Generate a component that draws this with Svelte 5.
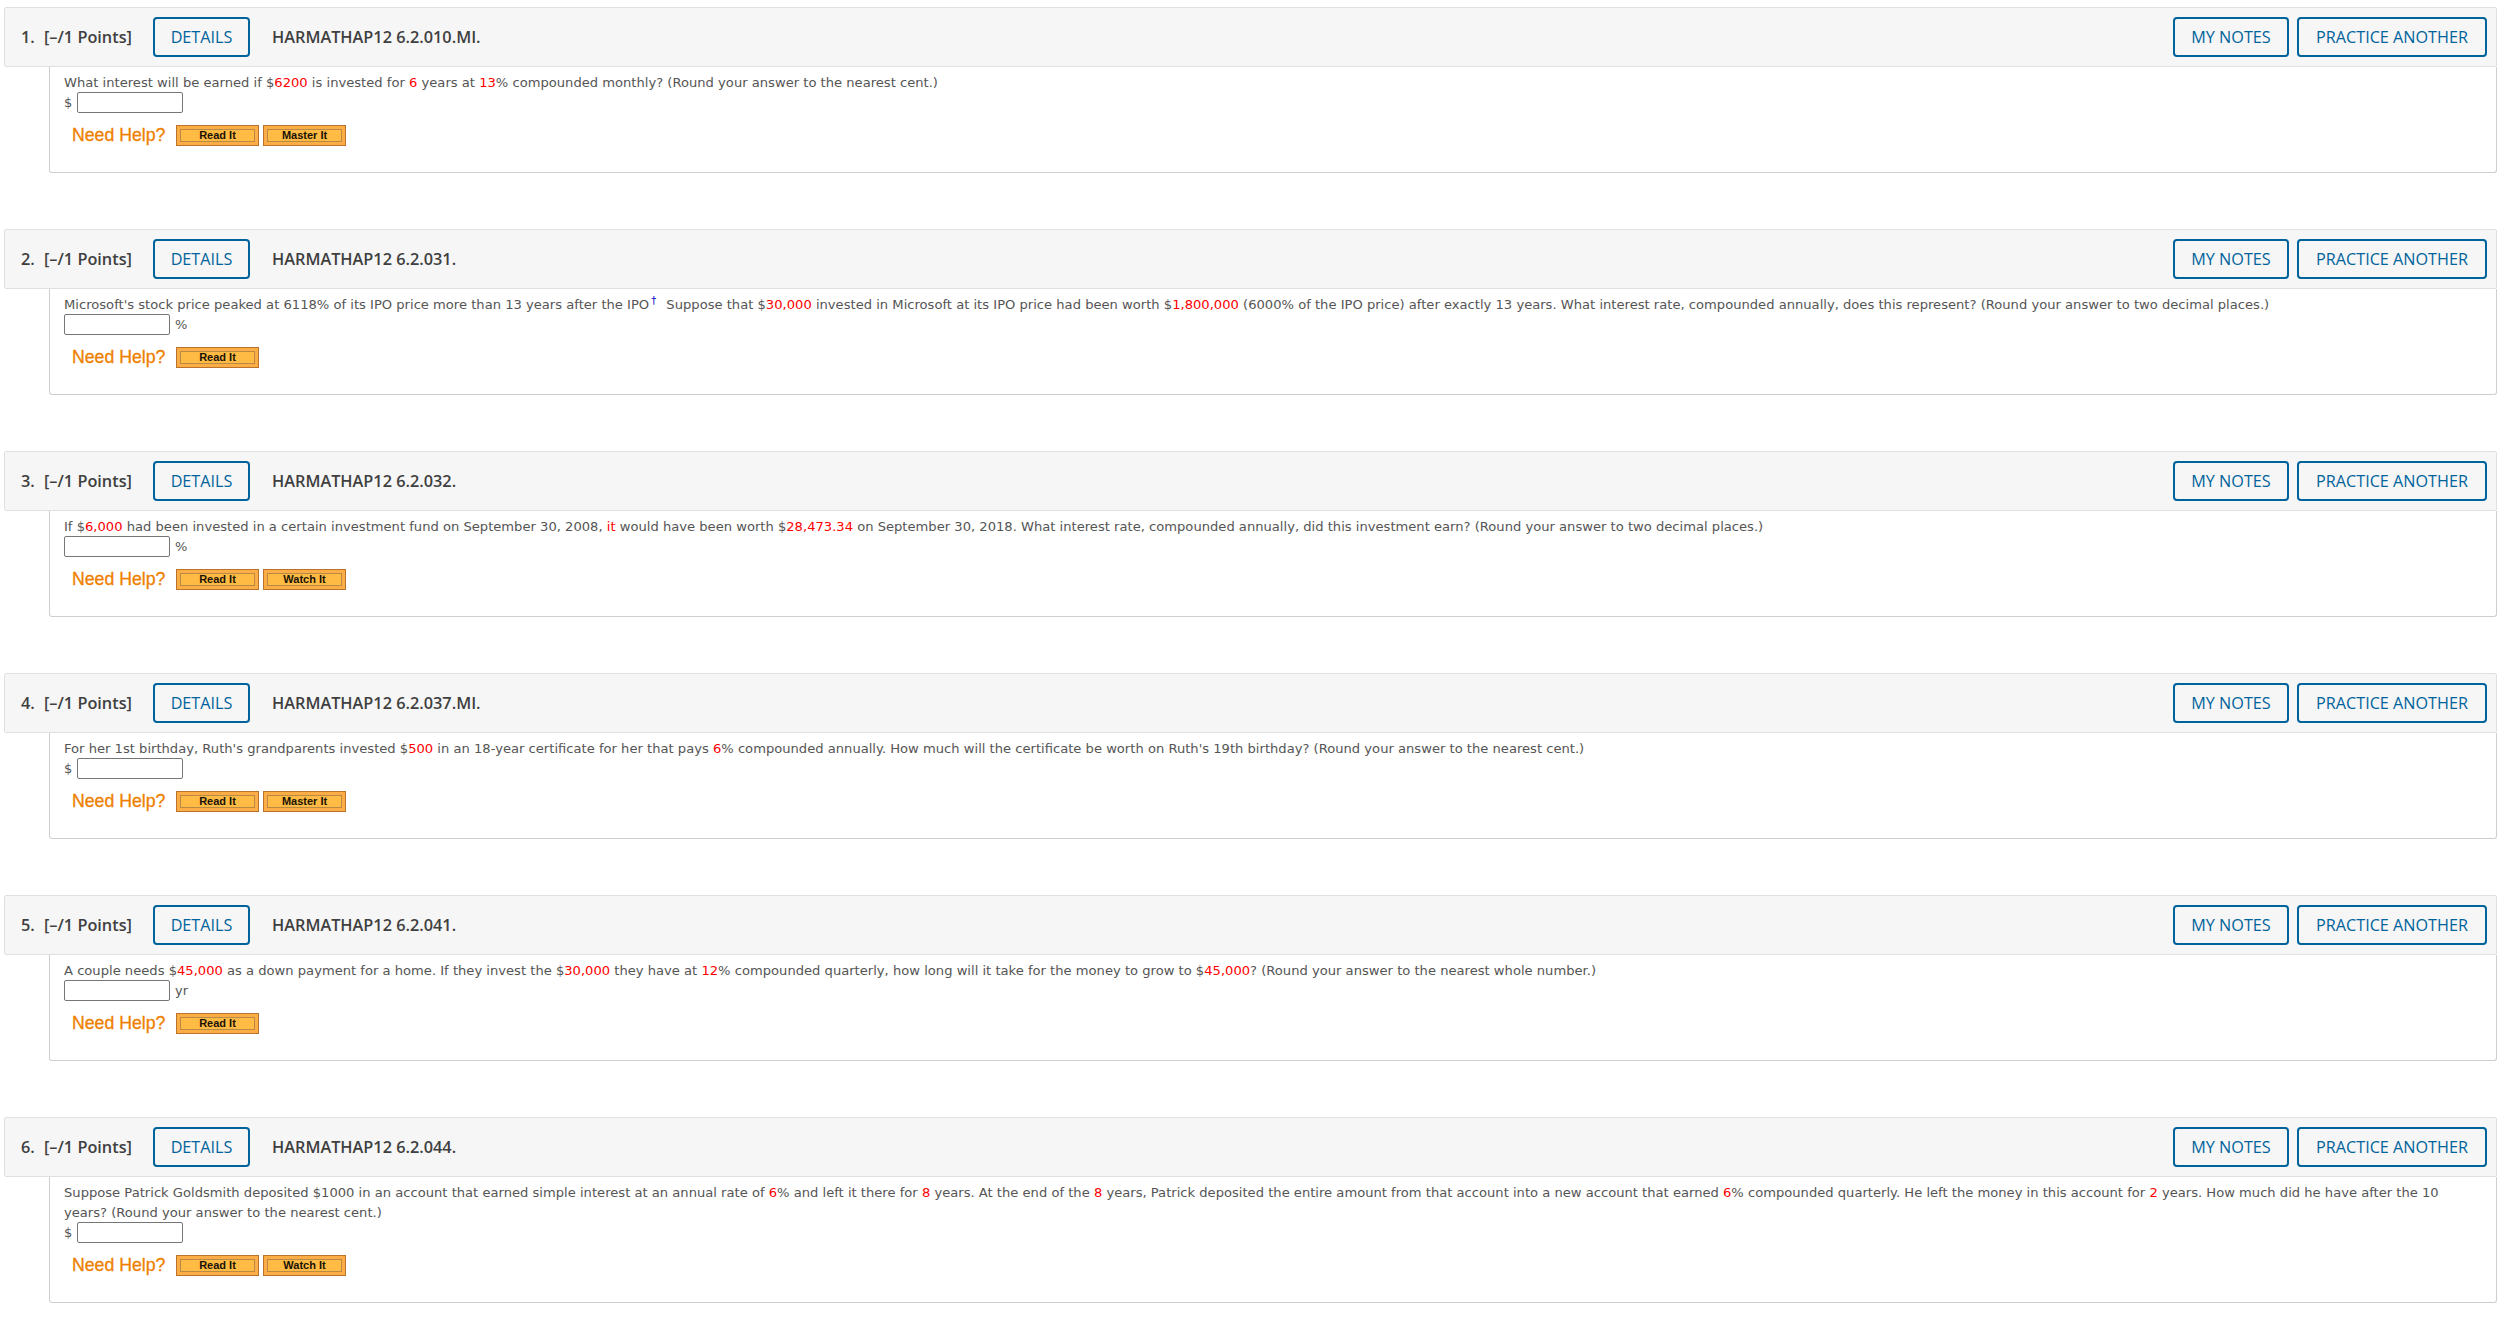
<script>
	// r = red value, d = dagger, plain strings are ordinary text
	const r = (t) => ({ t, red: true });
	const questions = [
		{
			code: "6.2.010.MI.",
			text: ["What interest will be earned if $", r("6200"), " is invested for ", r("6"), " years at ", r("13"), "% compounded monthly? (Round your answer to the nearest cent.)"],
			pre: "$",
			help: ["Read It", "Master It"]
		},
		{
			code: "6.2.031.",
			text: ["Microsoft's stock price peaked at 6118% of its IPO price more than 13 years after the IPO", { t: "†", dagger: true }, " Suppose that $", r("30,000"), " invested in Microsoft at its IPO price had been worth $", r("1,800,000"), " (6000% of the IPO price) after exactly 13 years. What interest rate, compounded annually, does this represent? (Round your answer to two decimal places.)"],
			post: "%",
			help: ["Read It"]
		},
		{
			code: "6.2.032.",
			text: ["If $", r("6,000"), " had been invested in a certain investment fund on September 30, 2008, ", r("it"), " would have been worth $", r("28,473.34"), " on September 30, 2018. What interest rate, compounded annually, did this investment earn? (Round your answer to two decimal places.)"],
			post: "%",
			help: ["Read It", "Watch It"]
		},
		{
			code: "6.2.037.MI.",
			text: ["For her 1st birthday, Ruth's grandparents invested $", r("500"), " in an 18-year certificate for her that pays ", r("6"), "% compounded annually. How much will the certificate be worth on Ruth's 19th birthday? (Round your answer to the nearest cent.)"],
			pre: "$",
			help: ["Read It", "Master It"]
		},
		{
			code: "6.2.041.",
			text: ["A couple needs $", r("45,000"), " as a down payment for a home. If they invest the $", r("30,000"), " they have at ", r("12"), "% compounded quarterly, how long will it take for the money to grow to $", r("45,000"), "? (Round your answer to the nearest whole number.)"],
			post: "yr",
			help: ["Read It"]
		},
		{
			code: "6.2.044.",
			text: ["Suppose Patrick Goldsmith deposited $1000 in an account that earned simple interest at an annual rate of ", r("6"), "% and left it there for ", r("8"), " years. At the end of the ", r("8"), " years, Patrick deposited the entire amount from that account into a new account that earned ", r("6"), "% compounded quarterly. He left the money in this account for ", r("2"), " years. How much did he have after the 10 years? (Round your answer to the nearest cent.)"],
			pre: "$",
			help: ["Read It", "Watch It"]
		}
	];
</script>

<div class="page">
	{#each questions as q, i}
		<section class="question">
			<header>
				<span class="num">{i + 1}.</span>
				<span class="points">[–/1 Points]</span>
				<button class="outline details">DETAILS</button>
				<span class="code">HARMATHAP12 {q.code}</span>
				<span class="spacer"></span>
				<button class="outline notes">MY NOTES</button>
				<button class="outline practice">PRACTICE ANOTHER</button>
			</header>
			<div class="body">
				<p>{#each q.text as part}{#if typeof part === "string"}{part}{:else if part.red}<span class="red">{part.t}</span>{:else}<sup class="dagger">{part.t}</sup>{/if}{/each}</p>
				<div class="answer">
					{#if q.pre}<span class="pre">{q.pre}</span>{/if}
					<input type="text" />
					{#if q.post}<span class="post">{q.post}</span>{/if}
				</div>
				<div class="help">
					<span class="need">Need Help?</span>
					{#each q.help as label}
						<span class="orange"><span class="inner">{label}</span></span>
					{/each}
				</div>
			</div>
		</section>
	{/each}
</div>

<style>
	:global(body) {
		margin: 0;
		background: #fff;
	}

	.page {
		padding: 7px 13px 0 4px;
	}

	.question {
		margin-bottom: 56px;
	}

	header {
		display: flex;
		align-items: center;
		height: 58px;
		padding: 0 9px 0 16px;
		background: #f6f6f6;
		border: 1px solid #e0e0e0;
		border-radius: 2px;
		font-family: "Open Sans", sans-serif;
		font-size: 16.3px;
		font-weight: 600;
		color: #3f3f3f;
	}

	.num {
		width: 23px;
	}

	.points {
		width: 109px;
	}

	.code {
		margin-left: 22px;
	}

	.spacer {
		flex: 1;
	}

	.outline {
		box-sizing: border-box;
		height: 40px;
		padding: 0;
		background: #f6f6f6;
		border: 2px solid #00639c;
		border-radius: 4px;
		font-family: "Open Sans", sans-serif;
		font-size: 16.2px;
		font-weight: 500;
		color: #00639c;
	}

	.details {
		width: 97px;
	}

	.notes {
		width: 116px;
		margin-right: 8px;
	}

	.practice {
		width: 190px;
	}

	.body {
		margin-left: 45px;
		padding: 5px 15px 0 14px;
		height: 100px;
		border: 1px solid #cfcfcf;
		border-top: none;
		border-radius: 0 0 3px 3px;
	}

	.question:last-child .body {
		height: 120px;
	}

	p {
		margin: 0 0 -1px;
		padding-top: 1px;
		font-family: "DejaVu Sans", sans-serif;
		font-size: 13.12px;
		line-height: 20px;
		color: #555;
	}

	.red {
		color: #f00;
	}

	.dagger {
		margin: 0 6px 0 2px;
		color: #00c;
		font-size: 10px;
		line-height: 0;
	}

	.answer {
		display: flex;
		align-items: center;
		gap: 5px;
		height: 21px;
		font-family: "DejaVu Sans", sans-serif;
		font-size: 13px;
		color: #555;
	}

	input {
		box-sizing: border-box;
		width: 106px;
		height: 21px;
		padding: 0;
		border: 1px solid #767676;
		border-radius: 2px;
		background: #fff;
	}

	.help {
		display: flex;
		align-items: center;
		gap: 4px;
		margin-top: 12px;
		padding-left: 8px;
	}

	.need {
		width: 100px;
		font-family: "Liberation Sans", sans-serif;
		font-size: 17.7px;
		color: #ee7f00;
		-webkit-text-stroke: 0.3px #ee7f00;
	}

	.orange {
		box-sizing: border-box;
		display: flex;
		width: 83px;
		height: 21px;
		padding: 3px;
		background: #fcad45;
		border: 1px solid #b9732a;
	}

	.inner {
		flex: 1;
		border: 1px solid #b98a45;
		background: #ffbb44;
		font-family: "Liberation Sans", sans-serif;
		font-size: 11px;
		font-weight: 700;
		line-height: 11px;
		text-align: center;
		color: #1a1204;
	}
</style>
